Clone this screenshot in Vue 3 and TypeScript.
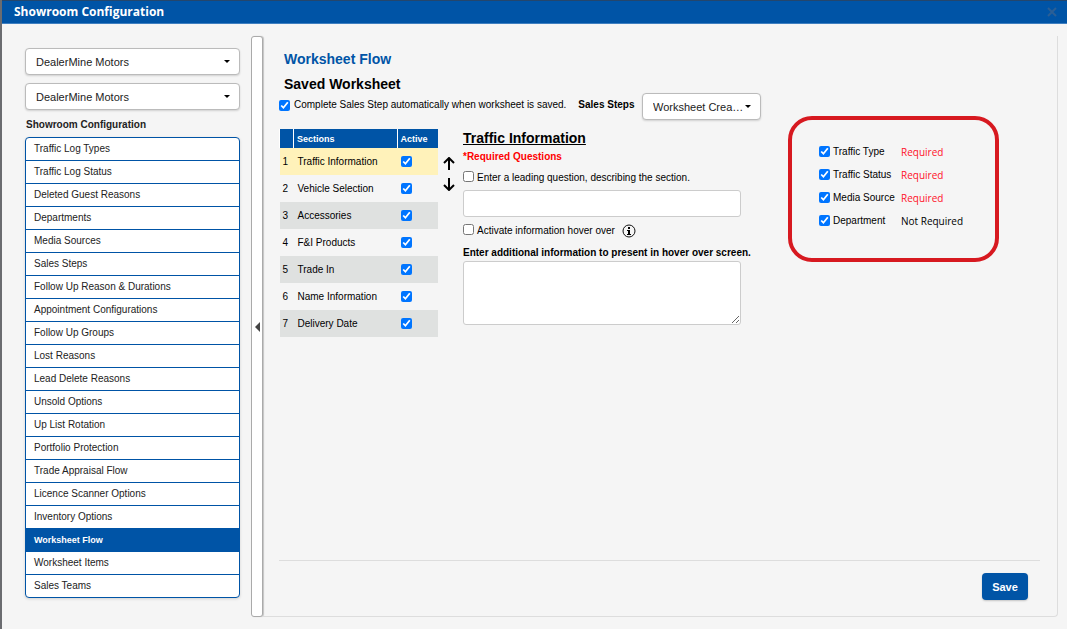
<script setup lang="ts">
import { ref } from 'vue'

interface Section {
  name: string
  active: boolean
}

interface Question {
  name: string
  enabled: boolean
  required: boolean
}

const menu: string[] = [
  'Traffic Log Types',
  'Traffic Log Status',
  'Deleted Guest Reasons',
  'Departments',
  'Media Sources',
  'Sales Steps',
  'Follow Up Reason & Durations',
  'Appointment Configurations',
  'Follow Up Groups',
  'Lost Reasons',
  'Lead Delete Reasons',
  'Unsold Options',
  'Up List Rotation',
  'Portfolio Protection',
  'Trade Appraisal Flow',
  'Licence Scanner Options',
  'Inventory Options',
  'Worksheet Flow',
  'Worksheet Items',
  'Sales Teams',
]
const currentPage = ref('Worksheet Flow')

const sections = ref<Section[]>([
  { name: 'Traffic Information', active: true },
  { name: 'Vehicle Selection', active: true },
  { name: 'Accessories', active: true },
  { name: 'F&I Products', active: true },
  { name: 'Trade In', active: true },
  { name: 'Name Information', active: true },
  { name: 'Delivery Date', active: true },
])
const selected = ref(0)

const questions = ref<Question[]>([
  { name: 'Traffic Type', enabled: true, required: true },
  { name: 'Traffic Status', enabled: true, required: true },
  { name: 'Media Source', enabled: true, required: true },
  { name: 'Department', enabled: true, required: false },
])

const autoComplete = ref(true)
const leadingOn = ref(false)
const leadingText = ref('')
const hoverOn = ref(false)
const hoverText = ref('')

function move(step: number) {
  const target = selected.value + step
  if (target < 0 || target >= sections.value.length) return
  const [row] = sections.value.splice(selected.value, 1)
  sections.value.splice(target, 0, row)
  selected.value = target
}
</script>

<template>
  <div class="dialog">
    <header class="titlebar">
      <h1>Showroom Configuration</h1>
      <button type="button" class="close" aria-label="Close">
        <svg viewBox="0 0 10 10" width="10" height="10"><path d="M1 1l8 8M9 1l-8 8" /></svg>
      </button>
    </header>

    <div class="body">
      <aside class="sidebar">
        <div class="select">
          <select aria-label="Dealer group"><option>DealerMine Motors</option></select>
          <svg class="caret" viewBox="0 0 6 3" width="6" height="3"><path d="M0 0h6l-3 3z" /></svg>
        </div>
        <div class="select">
          <select aria-label="Dealer"><option>DealerMine Motors</option></select>
          <svg class="caret" viewBox="0 0 6 3" width="6" height="3"><path d="M0 0h6l-3 3z" /></svg>
        </div>
        <h2>Showroom Configuration</h2>
        <nav class="menu">
          <a
            v-for="item in menu"
            :key="item"
            href="#"
            :class="{ current: item === currentPage }"
            @click.prevent="currentPage = item"
          >{{ item }}</a>
        </nav>
      </aside>

      <button type="button" class="splitter" aria-label="Collapse sidebar">
        <svg viewBox="0 0 5 10" width="5" height="10"><path d="M5 0v10L0 5z" /></svg>
      </button>

      <main class="panel">
        <h2 class="page-title">Worksheet Flow</h2>
        <h3 class="sub-title">Saved Worksheet</h3>

        <div class="workspace">
          <div class="editor">
            <div class="save-row">
              <label class="check"><input v-model="autoComplete" type="checkbox" />Complete Sales Step automatically when worksheet is saved.</label>
              <label class="steps-label" for="steps">Sales Steps</label>
              <div class="select steps">
                <select id="steps"><option>Worksheet Crea…</option></select>
                <svg class="caret" viewBox="0 0 6 3" width="6" height="3"><path d="M0 0h6l-3 3z" /></svg>
              </div>
            </div>

            <div class="columns">
              <table class="sections">
                <thead>
                  <tr><th class="num"></th><th>Sections</th><th class="active">Active</th></tr>
                </thead>
                <tbody>
                  <tr
                    v-for="(section, i) in sections"
                    :key="section.name"
                    :class="{ picked: i === selected }"
                    @click="selected = i"
                  >
                    <td class="num">{{ i + 1 }}</td>
                    <td>{{ section.name }}</td>
                    <td class="active"><input v-model="section.active" type="checkbox" :aria-label="section.name + ' active'" /></td>
                  </tr>
                </tbody>
              </table>

              <div class="arrows">
                <button type="button" aria-label="Move up" @click="move(-1)">
                  <svg viewBox="0 0 12 14" width="12" height="14"><path d="M6 13V1.500M1 6l5-5 5 5" /></svg>
                </button>
                <button type="button" aria-label="Move down" @click="move(1)">
                  <svg viewBox="0 0 12 14" width="12" height="14"><path d="M6 1v11.500M1 8l5 5 5-5" /></svg>
                </button>
              </div>

              <section class="details">
                <h3>Traffic Information</h3>
                <p class="note">*Required Questions</p>
                <label class="check"><input v-model="leadingOn" type="checkbox" />Enter a leading question, describing the section.</label>
                <input v-model="leadingText" class="field" type="text" aria-label="Leading question" />
                <div class="hover-row">
                  <label class="check"><input v-model="hoverOn" type="checkbox" />Activate information hover over</label>
                  <svg class="info" viewBox="0 0 14 14" width="14" height="14">
                    <circle cx="7" cy="7" r="6" />
                    <path d="M6 3h2v2H6zM5 6h3v4h1v1H5v-1h1V7H5z" />
                  </svg>
                </div>
                <label class="area-label" for="hover-text">Enter additional information to present in hover over screen.</label>
                <textarea id="hover-text" v-model="hoverText" class="field area"></textarea>
              </section>
            </div>
          </div>

          <ul class="questions">
            <li v-for="q in questions" :key="q.name">
              <label class="check"><input v-model="q.enabled" type="checkbox" />{{ q.name }}</label>
              <span class="state" :class="{ required: q.required }">{{ q.required ? 'Required' : 'Not Required' }}</span>
            </li>
          </ul>
        </div>

        <footer class="actions">
          <button type="button" class="save">Save</button>
        </footer>
      </main>
    </div>
  </div>
</template>

<style>
body {
  background: #f5f5f5;
}
</style>

<style scoped>
.dialog,
.dialog * {
  box-sizing: border-box;
}

.dialog {
  display: flex;
  flex-direction: column;
  min-height: 100vh;
  border-left: 2px solid #6b6c70;
  background: #f5f5f5;
  color: #000;
  font-family: "Liberation Sans", Arial, sans-serif;
  font-size: 10px;
  line-height: 12px;
}

h1,
h2,
h3,
p,
ul {
  margin: 0;
  padding: 0;
}

button,
input,
select,
textarea {
  font-family: inherit;
}

button {
  padding: 0;
  border: 0;
  background: none;
  cursor: pointer;
}

svg {
  display: block;
}

.titlebar {
  display: flex;
  align-items: center;
  justify-content: space-between;
  height: 24px;
  padding: 0 10px 0 12px;
  border-top: 1px solid #24466c;
  border-bottom: 1px solid #3f7fc0;
  background: #0054a6;
}

.titlebar h1 {
  color: #fff;
  font-family: "Open Sans", sans-serif;
  font-size: 12px;
  line-height: 22px;
}

.close path {
  fill: none;
  stroke: #2b5f96;
  stroke-width: 2;
}

.body {
  flex: 1;
  display: flex;
  padding: 12px 9px 12px 23px;
}

.sidebar {
  display: flex;
  flex-direction: column;
  width: 215px;
  padding-top: 12px;
}

.select {
  display: grid;
  align-items: center;
  margin-bottom: 8px;
}

.select > * {
  grid-area: 1 / 1;
}

.select select {
  width: 100%;
  height: 27px;
  padding: 0 10px;
  appearance: none;
  border: 1px solid #bbb;
  border-radius: 4px;
  background: #fff;
  box-shadow: 0 1px 2px rgba(0, 0, 0, 0.15);
  color: #222;
  font-size: 11px;
}

.caret {
  justify-self: end;
  margin-right: 10px;
  pointer-events: none;
}

.sidebar h2 {
  margin: 1px 1px 6px;
  color: #222;
  font-size: 10px;
  line-height: 12px;
}

.menu {
  display: flex;
  flex-direction: column;
  overflow: hidden;
  border: 1px solid #0054a6;
  border-radius: 4px;
  background: #fff;
  box-shadow: 0 1px 3px rgba(0, 0, 0, 0.15);
}

.menu a {
  height: 23px;
  padding: 0 8px;
  border-bottom: 1px solid #0054a6;
  color: #222;
  line-height: 22px;
  text-decoration: none;
}

.menu a:last-child {
  height: 22px;
  border-bottom: 0;
}

.menu .current {
  background: #0054a6;
  color: #fff;
  font-size: 9px;
  font-weight: bold;
}

.splitter {
  display: flex;
  align-items: center;
  justify-content: center;
  width: 12px;
  margin-left: 11px;
  border: 1px solid #aaa;
  border-radius: 3px;
  background: #fff;
  box-shadow: 1px 0 1px rgba(0, 0, 0, 0.2);
}

.splitter path {
  fill: #444;
}

.panel {
  flex: 1;
  display: flex;
  flex-direction: column;
  min-width: 0;
  padding: 14px 17px 0 16px;
  border-right: 1px solid #ddd;
  border-bottom: 1px solid #ddd;
  border-radius: 0 0 4px 0;
}

.page-title,
.sub-title {
  margin-left: 5px;
  font-size: 14px;
  line-height: 18px;
}

.page-title {
  margin-bottom: 7px;
  color: #0054a6;
}

.workspace {
  display: flex;
  align-items: flex-start;
}

.check {
  display: flex;
  align-items: center;
  gap: 3px;
}

input[type='checkbox'] {
  flex: none;
  width: 11px;
  height: 11px;
  margin: 0;
}

.save-row {
  display: flex;
  align-items: flex-start;
  line-height: 24px;
}

.save-row .check {
  gap: 4px;
}

.steps-label {
  margin: 0 7px 0 12px;
  font-weight: bold;
}

.steps {
  width: 119px;
  margin-left: auto;
}

.columns {
  display: flex;
  align-items: flex-start;
  margin-top: 1px;
}

.sections {
  width: 159px;
  border-collapse: collapse;
}

.sections th {
  height: 19px;
  padding: 0 3px;
  border-left: 1px solid #fff;
  background: #0054a6;
  color: #fff;
  font-size: 9px;
  text-align: left;
}

.sections td {
  height: 27px;
  padding: 0 4px;
}

.sections .num {
  width: 14px;
  padding: 0 3px;
}

.sections .active {
  width: 41px;
}

.sections td input {
  display: block;
}

.sections tbody tr:nth-child(odd) {
  background: #dfe1e0;
}

.sections tbody .picked:nth-child(n) {
  background: #fff2ba;
}

.arrows {
  display: flex;
  flex-direction: column;
  gap: 6px;
  margin: 28px 8px 0 5px;
}

.arrows path {
  fill: none;
  stroke: #000;
  stroke-width: 2;
}

.details {
  width: 298px;
}

.details h3 {
  margin-bottom: 2px;
  font-size: 14px;
  line-height: 18px;
  text-decoration: underline;
}

.details .check {
  align-items: flex-start;
  line-height: 14px;
}

.note {
  margin-bottom: 6px;
  color: #f00;
  font-weight: bold;
  line-height: 16px;
}

.field {
  display: block;
  width: 278px;
  height: 27px;
  padding: 4px 8px;
  border: 1px solid #ccc;
  border-radius: 3px;
  background: #fff;
  font-size: 11px;
}

.details > input.field {
  margin: 5px 0 6px;
}

.details > .area {
  height: 64px;
}

.hover-row {
  display: flex;
  align-items: center;
  gap: 7px;
  height: 16px;
}

.info circle {
  fill: none;
  stroke: #111;
  stroke-width: 1;
}

.area-label {
  display: block;
  padding-top: 6px;
  font-weight: bold;
  line-height: 16px;
  white-space: nowrap;
}

.questions {
  width: 211px;
  margin: 23px 0 0 27px;
  padding: 20px 26px 26px 27px;
  border: 4px solid #d71920;
  border-radius: 24px;
  list-style: none;
}

.questions li {
  display: grid;
  grid-template-columns: 82px 1fr;
  align-items: center;
  height: 23px;
}

.state {
  font-family: "Open Sans", sans-serif;
  font-size: 10px;
  white-space: nowrap;
}

.required {
  color: #ff1229;
}

.actions {
  display: flex;
  justify-content: flex-end;
  margin-top: auto;
  padding: 12px 12px 16px;
  border-top: 1px solid #ddd;
}

.save {
  width: 46px;
  height: 27px;
  border-radius: 4px;
  background: #0054a6;
  box-shadow: 0 1px 2px rgba(0, 0, 0, 0.2);
  color: #fff;
  font-size: 11px;
  font-weight: bold;
}
</style>
